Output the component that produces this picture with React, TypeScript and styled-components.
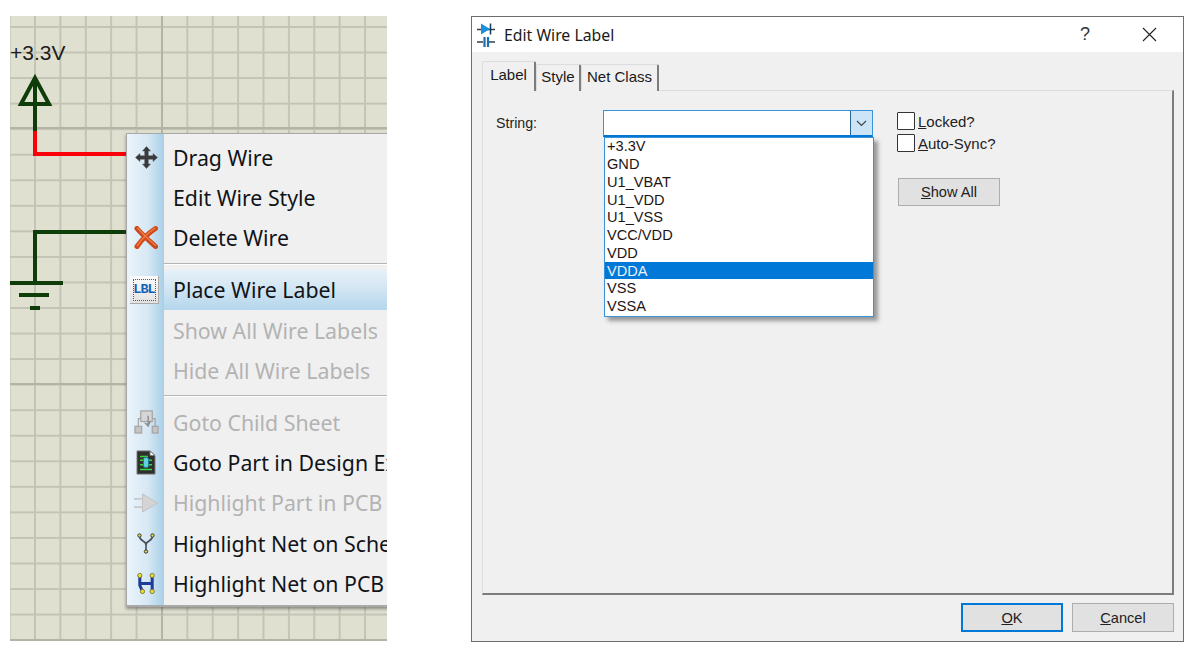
import * as React from "react";
import styled, { createGlobalStyle } from "styled-components";

const GlobalStyle = createGlobalStyle`
  html, body {
    margin: 0;
    padding: 0;
    background: #fff;
  }
`;

const Page = styled.div`
  display: flex;
  align-items: flex-start;
  gap: 84px;
  width: 1199px;
  height: 654px;
  padding: 16px 0 0 10px;
  box-sizing: border-box;
  overflow: hidden;
`;

/* ---------- schematic ---------- */

const Schematic = styled.div`
  position: relative;
  flex: none;
  width: 377px;
  height: 625px;
  overflow: hidden;
  background-color: #e0e0d0;
  background-image:
    linear-gradient(90deg, #b4b4a6 2px, transparent 2px),
    linear-gradient(180deg, #b4b4a6 2px, transparent 2px),
    linear-gradient(90deg, #c4c4b6 2px, transparent 2px),
    linear-gradient(180deg, #c4c4b6 2px, transparent 2px);
  background-size: 254px 100%, 100% 256px, 25.4px 100%, 100% 25.55px;
  background-position: 151px 0, 0 111px, 24px 0, 0 10px;
`;

const Wires = styled.svg`
  position: absolute;
  left: 0;
  top: 0;
`;

const PowerLabel = styled.span`
  position: absolute;
  left: 0;
  top: 25px;
  font: 21px "Liberation Sans", Arial, sans-serif;
  color: #1c1c1c;
`;

const Menu = styled.div`
  position: absolute;
  left: 116px;
  top: 117px;
  width: 270px;
  height: 474px;
  box-sizing: border-box;
  padding: 3px 0 0 1px;
  border: 1px solid #a9a9a9;
  border-bottom-width: 2px;
  box-shadow: 0 2px 3px rgba(70, 70, 70, 0.55);
  background-color: #f0f0f0;
  background-image: linear-gradient(90deg, #eaf4fb 0%, #d6e8f4 55%, #a9cfe7 100%);
  background-size: 36px 100%;
  background-position: 1px 0;
  background-repeat: no-repeat;
  font-family: "Noto Sans", "Open Sans", sans-serif;
`;

const MenuRow = styled.div<{ $disabled?: boolean }>`
  display: flex;
  align-items: center;
  height: 40.4px;
  font-size: 21.3px;
  white-space: nowrap;
  color: ${(p) => (p.$disabled ? "#b3b3b3" : "#101418")};
`;

const MenuIcon = styled.span`
  flex: none;
  display: flex;
  align-items: center;
  justify-content: center;
  width: 36px;
  height: 100%;
`;

const MenuText = styled.span<{ $active?: boolean }>`
  flex: 1;
  display: flex;
  align-items: center;
  height: 100%;
  padding-left: 9px;
  background: ${(p) => (p.$active ? "linear-gradient(180deg, #e6f1f9 0%, #d3e6f3 45%, #b4d6ec 100%)" : "none")};
`;

const MenuSeparator = styled.div<{ $height: number }>`
  height: ${(p) => p.$height}px;
  margin-left: 36px;
  display: flex;
  align-items: center;

  &::before {
    content: "";
    flex: 1;
    height: 1px;
    background: #b4b4b4;
    border-bottom: 1px solid #fff;
  }
`;

const LabelChip = styled.span`
  display: flex;
  align-items: center;
  justify-content: center;
  width: 29px;
  height: 28px;
  box-sizing: border-box;
  margin-left: -3px;
  background: linear-gradient(180deg, #fbfbfb, #e2e2e2);
  border-right: 1px solid #aaa;
  border-bottom: 1px solid #aaa;
  font: bold 13.5px "Liberation Mono", monospace;
  letter-spacing: -1px;
  color: #1560b8;
  outline: 1px dotted #3f5f88;
  outline-offset: -4px;
`;

/* ---------- dialog ---------- */

const Dialog = styled.div`
  flex: none;
  display: flex;
  flex-direction: column;
  width: 713px;
  height: 626px;
  box-sizing: border-box;
  border: 1px solid #6d6d6d;
  background: #f0f0f0;
`;

const TitleBar = styled.div`
  flex: none;
  display: flex;
  align-items: center;
  height: 35px;
  padding-left: 5px;
  background: #fff;
  font: 15.8px "Noto Sans", "Open Sans", sans-serif;
  color: #1a1a1a;
`;

const TitleText = styled.span`
  flex: 1;
  margin-left: 9px;
`;

const TitleButton = styled.span<{ $gap: number }>`
  display: flex;
  justify-content: center;
  width: 34px;
  margin-right: ${(p) => p.$gap}px;
  font: 18px "Liberation Sans", Arial, sans-serif;
  color: #333;
`;

const Body = styled.div`
  flex: 1;
  display: flex;
  flex-direction: column;
  min-height: 0;
  padding: 10px 9px 9px 10px;
`;

const Tabs = styled.div`
  flex: none;
  display: flex;
  align-items: flex-end;
  height: 29px;
  margin-bottom: -1px;
  position: relative;
  z-index: 1;
`;

const Tab = styled.div<{ $active?: boolean; $width: number }>`
  box-sizing: border-box;
  width: ${(p) => p.$width}px;
  height: ${(p) => (p.$active ? 30 : 27)}px;
  padding-bottom: 4px;
  display: flex;
  align-items: center;
  justify-content: center;
  border: 1px solid #dcdcdc;
  border-bottom: none;
  border-right: 2px solid #7d7d7d;
  border-radius: 2px 2px 0 0;
  background: #f0f0f0;
  font: 15px "Liberation Sans", Arial, sans-serif;
  color: #1a1a1a;
`;

const Panel = styled.div`
  flex: 1;
  display: flex;
  align-items: flex-start;
  box-sizing: border-box;
  min-height: 0;
  padding: 19px 0 0 13px;
  border: 1px solid #dcdcdc;
  border-right: 2px solid #7d7d7d;
  border-bottom: 2px solid #7d7d7d;
`;

const FieldLabel = styled.span`
  flex: none;
  width: 107px;
  margin-top: 5px;
  font: 14.2px "Liberation Sans", Arial, sans-serif;
  color: #222;
`;

const Combo = styled.div`
  position: relative;
  flex: none;
  display: flex;
  width: 270px;
  height: 27px;
  box-sizing: border-box;
  background: #fff;
  border: 1px solid #3a93d8;
  border-bottom: 2px solid #0078d7;
`;

const ComboField = styled.div`
  flex: 1;
`;

const ComboButton = styled.div`
  flex: none;
  width: 21px;
  display: flex;
  align-items: center;
  justify-content: center;
  background: #cce4f7;
  border-left: 1px solid #2c628b;
`;

const ListBox = styled.div`
  position: absolute;
  left: 0;
  top: 26px;
  width: 270px;
  height: 180px;
  box-sizing: border-box;
  background: #fff;
  border: 1px solid #3a93d8;
  box-shadow: 4px 4px 4px rgba(80, 80, 80, 0.55);
`;

const ListRow = styled.div<{ $selected?: boolean }>`
  height: 17.75px;
  padding-left: 2px;
  font: 14.6px/18px "Liberation Sans", Arial, sans-serif;
  color: ${(p) => (p.$selected ? "#e8f2fb" : "#1e1414")};
  background: ${(p) => (p.$selected ? "#0078d7" : "none")};

  &:first-child {
    margin-top: -0.7px;
  }
`;

const SideColumn = styled.div`
  flex: none;
  display: flex;
  flex-direction: column;
  align-items: flex-start;
  margin-left: 24px;
`;

const CheckRow = styled.div`
  display: flex;
  align-items: center;
  height: 22px;
  gap: 3px;
  font: 15px "Liberation Sans", Arial, sans-serif;
  color: #222;
`;

const CheckBox = styled.span`
  display: block;
  width: 18px;
  height: 18px;
  box-sizing: border-box;
  background: #fff;
  border: 1px solid #333;
  border-radius: 1px;
`;

const Button = styled.div<{ $default?: boolean }>`
  flex: none;
  display: flex;
  align-items: center;
  justify-content: center;
  width: 102px;
  height: 29px;
  box-sizing: border-box;
  background: #e1e1e1;
  border: ${(p) => (p.$default ? "2px solid #0078d7" : "1px solid #adadad")};
  font: 14.6px "Liberation Sans", Arial, sans-serif;
  color: #222;
`;

const ShowAll = styled(Button)`
  margin: 24px 0 0 1px;
  height: 28px;
`;

const Footer = styled.div`
  flex: none;
  display: flex;
  justify-content: flex-end;
  gap: 9px;
  padding-top: 8px;
`;

/* ---------- icons ---------- */

const MoveIcon = () => (
  <svg width="23" height="23" viewBox="0 0 23 23" fill="#3a3a3a" stroke="#555" strokeWidth="0.500">
    <path d="M11.500 0.500l4 4.500h-2.200v4.700H18V7.500l4.500 4-4.500 4v-2.200h-4.700V18h2.200l-4 4.500-4-4.500h2.200v-4.700H5v2.200l-4.500-4 4.500-4v2.200h4.700V5H7.500z" />
  </svg>
);

const CrossIcon = () => (
  <svg width="24" height="23" viewBox="0 0 24 23" strokeLinecap="round" fill="none">
    <path d="M3 2.500c5 6 12 12 18.500 18" stroke="#c8481c" strokeWidth="5" />
    <path d="M21.500 2.500C14 7.500 7.500 14 3 20.500" stroke="#d24a1c" strokeWidth="5" />
    <path d="M3.500 2c5 6 12 12 18 17.500M21 2C14 7 7.500 13 3.500 19.500" stroke="#f07a42" strokeWidth="1.500" />
  </svg>
);

const ChildSheetIcon = () => (
  <svg width="25" height="24" viewBox="0 0 26 25" fill="#c4c4c4" stroke="#a6a6a6" strokeWidth="1.300">
    <rect x="7" y="1" width="12" height="11" fill="#d6d6d6" />
    <rect x="1" y="17" width="7" height="7" />
    <rect x="19" y="17" width="6" height="7" />
    <path d="M4.500 17v-8H7M22 17v-8h-3" fill="none" />
    <path d="M14 6v8l-4 -1 5 5 3-7-2.500 1V6z" fill="#8f8f8f" stroke="none" />
  </svg>
);

const PartIcon = () => (
  <svg width="20" height="25" viewBox="0 0 20 27" preserveAspectRatio="none">
    <path d="M1 1h13l5 5v20H1z" fill="#2f2f2f" stroke="#777" />
    <path d="M14 1v5h5z" fill="#fff" stroke="#777" />
    <path d="M4 7h8M4 21h12M4 11h4M12 11h4M4 16h4M12 16h4" stroke="#39d33a" strokeWidth="1.600" fill="none" />
    <rect x="7.500" y="8" width="5" height="11" rx="2" fill="#63d2e0" stroke="#1b7c8c" />
  </svg>
);

const HighlightPartIcon = () => (
  <svg width="24" height="20" viewBox="0 0 24 22" fill="none" preserveAspectRatio="none">
    <path d="M8.500 1l15 10-15 10z" fill="#d4d4d4" stroke="#c0c0c0" />
    <path d="M0 6.500h9M0 15.500h9" stroke="#c8c8c8" strokeWidth="2" />
  </svg>
);

const NetSchematicIcon = () => (
  <svg width="18" height="21" viewBox="0 0 18 21" fill="#e4d64a" stroke="#3b3b3b" strokeWidth="1">
    <path d="M2.500 3c0 6 6.500 4 6.500 9v6M15.500 3c0 6-6.500 4-6.500 9" fill="none" stroke="#454f5a" strokeWidth="1.600" />
    <circle cx="2.500" cy="2.500" r="1.700" />
    <circle cx="15.500" cy="2.500" r="1.700" />
    <circle cx="9" cy="18.500" r="1.700" />
  </svg>
);

const NetPcbIcon = () => (
  <svg width="20" height="23" viewBox="0 0 22 26" fill="#eedd30" stroke="#75712e" strokeWidth="1">
    <path d="M4 4v11l3 7M18 4v18M4 13h14" stroke="#1f3c9a" strokeWidth="3.400" fill="none" />
    <circle cx="4" cy="4" r="2.400" />
    <circle cx="18" cy="4" r="2.400" />
    <circle cx="7" cy="22" r="2.400" />
    <circle cx="18" cy="22" r="2.400" />
  </svg>
);

const AppIcon = () => (
  <svg width="18" height="24" viewBox="0 0 18 24">
    <path d="M0 6.500h18" stroke="#30404e" strokeWidth="1.500" />
    <path d="M4 0.500l9 5.500-9 5.500z" fill="#1a8fe0" />
    <path d="M13.500 0.500v11" stroke="#12395a" strokeWidth="1.500" />
    <path d="M0 19h6M12 19h6" stroke="#30404e" strokeWidth="1.500" />
    <path d="M7.500 14v10M11 14v10" stroke="#1a6fb0" strokeWidth="2.200" />
  </svg>
);

const Chevron = () => (
  <svg width="11" height="7" viewBox="0 0 11 7" fill="none" stroke="#444" strokeWidth="1.200">
    <path d="M1 1l4.500 4.500L10 1" />
  </svg>
);

const CloseGlyph = () => (
  <svg width="15" height="15" viewBox="0 0 15 15" stroke="#222" strokeWidth="1.100">
    <path d="M1 1l13 13M14 1L1 14" />
  </svg>
);

const menuGroups = [
  [
    { text: "Drag Wire", icon: <MoveIcon /> },
    { text: "Edit Wire Style" },
    { text: "Delete Wire", icon: <CrossIcon /> },
  ],
  [
    { text: "Place Wire Label", icon: <LabelChip>LBL</LabelChip>, active: true },
    { text: "Show All Wire Labels", disabled: true },
    { text: "Hide All Wire Labels", disabled: true },
  ],
  [
    { text: "Goto Child Sheet", icon: <ChildSheetIcon />, disabled: true },
    { text: "Goto Part in Design Explorer", icon: <PartIcon /> },
    { text: "Highlight Part in PCB Layout", icon: <HighlightPartIcon />, disabled: true },
    { text: "Highlight Net on Schematic", icon: <NetSchematicIcon /> },
    { text: "Highlight Net on PCB", icon: <NetPcbIcon /> },
  ],
];

const nets = ["+3.3V", "GND", "U1_VBAT", "U1_VDD", "U1_VSS", "VCC/VDD", "VDD", "VDDA", "VSS", "VSSA"];

export default function App() {
  return (
    <Page>
      <GlobalStyle />
      <Schematic>
        <Wires width="377" height="625" fill="none" strokeWidth="4">
          <path d="M25 65V115" stroke="#0f3d0a" />
          <path d="M11 88L25 62L39 88Z" stroke="#0f3d0a" />
          <path d="M25 115V138H120" stroke="#fa0008" />
          <path d="M120 216H25V267" stroke="#0f3d0a" />
          <path d="M0 267H53M9 279H39M20 292H30" stroke="#0f3d0a" />
        </Wires>
        <PowerLabel>+3.3V</PowerLabel>
        <Menu>
          {menuGroups.map((group, i) => (
            <React.Fragment key={i}>
              {i > 0 && <MenuSeparator $height={i === 1 ? 11.5 : 11} />}
              {group.map((item) => (
                <MenuRow key={item.text} $disabled={item.disabled}>
                  <MenuIcon>{item.icon}</MenuIcon>
                  <MenuText $active={item.active}>{item.text}</MenuText>
                </MenuRow>
              ))}
            </React.Fragment>
          ))}
        </Menu>
      </Schematic>

      <Dialog>
        <TitleBar>
          <AppIcon />
          <TitleText>Edit Wire Label</TitleText>
          <TitleButton $gap={30}>?</TitleButton>
          <TitleButton $gap={17}>
            <CloseGlyph />
          </TitleButton>
        </TitleBar>
        <Body>
          <Tabs>
            <Tab $active $width={54}>Label</Tab>
            <Tab $width={45}>Style</Tab>
            <Tab $width={78}>Net Class</Tab>
          </Tabs>
          <Panel>
            <FieldLabel>String:</FieldLabel>
            <Combo>
              <ComboField />
              <ComboButton>
                <Chevron />
              </ComboButton>
              <ListBox>
                {nets.map((net) => (
                  <ListRow key={net} $selected={net === "VDDA"}>{net}</ListRow>
                ))}
              </ListBox>
            </Combo>
            <SideColumn>
              <CheckRow>
                <CheckBox />
                <span><u>L</u>ocked?</span>
              </CheckRow>
              <CheckRow>
                <CheckBox />
                <span><u>A</u>uto-Sync?</span>
              </CheckRow>
              <ShowAll><span><u>S</u>how All</span></ShowAll>
            </SideColumn>
          </Panel>
          <Footer>
            <Button $default><span><u>O</u>K</span></Button>
            <Button><span><u>C</u>ancel</span></Button>
          </Footer>
        </Body>
      </Dialog>
    </Page>
  );
}
